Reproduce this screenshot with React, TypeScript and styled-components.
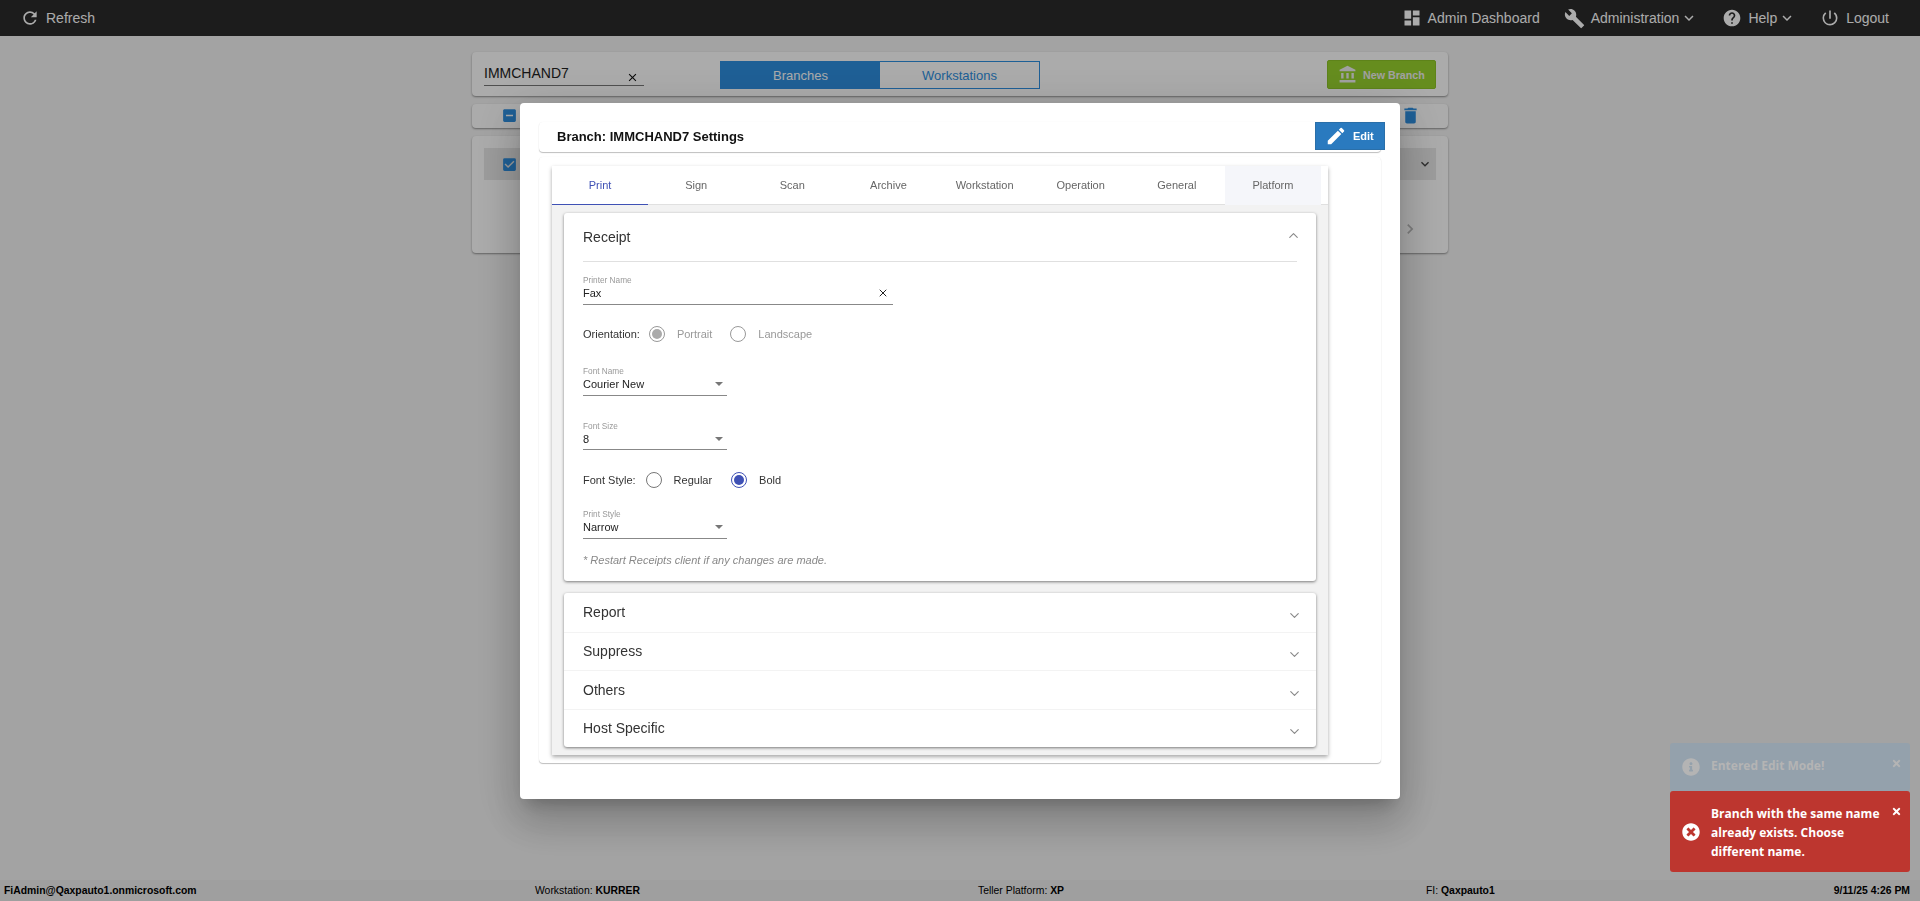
import React from 'react';
import styled, { createGlobalStyle } from 'styled-components';
import {
  MdRefresh,
  MdDashboard,
  MdBuild,
  MdHelp,
  MdPowerSettingsNew,
  MdKeyboardArrowDown,
  MdEdit,
  MdDelete,
  MdAccountBalance,
  MdClose,
  MdIndeterminateCheckBox,
  MdCheckBox,
  MdChevronRight,
} from 'react-icons/md';
import { FaTimesCircle, FaInfoCircle, FaTimes } from 'react-icons/fa';
import { ChevronDown, ChevronUp, X } from 'lucide-react';

const BLUE = '#2e8fe0';
const INDIGO = '#3f51b5';

const tabs = ['Print', 'Sign', 'Scan', 'Archive', 'Workstation', 'Operation', 'General', 'Platform'];
const closedPanels = ['Report', 'Suppress', 'Others', 'Host Specific'];

const App: React.FC = () => {
  return (
    <>
      <GlobalStyle />
      <Page>
        <TopBar>
          <NavItem>
            <MdRefresh size={20} />
            <span>Refresh</span>
          </NavItem>
          <NavGroup>
            <NavItem>
              <MdDashboard size={20} />
              <span>Admin Dashboard</span>
            </NavItem>
            <NavItem>
              <MdBuild size={21} />
              <span>Administration</span>
              <MdKeyboardArrowDown size={18} />
            </NavItem>
            <NavItem>
              <MdHelp size={20} />
              <span>Help</span>
              <MdKeyboardArrowDown size={18} />
            </NavItem>
            <NavItem>
              <MdPowerSettingsNew size={20} />
              <span>Logout</span>
            </NavItem>
          </NavGroup>
        </TopBar>

        <Content>
          <SearchCard>
            <SearchBox>
              <span>IMMCHAND7</span>
              <MdClose size={13} color="#111" />
            </SearchBox>
            <Toggle>
              <ToggleButton $active>Branches</ToggleButton>
              <ToggleButton>Workstations</ToggleButton>
            </Toggle>
            <NewBranch>
              <MdAccountBalance size={19} />
              <span>New Branch</span>
            </NewBranch>
          </SearchCard>
          <ActionsCard>
            <MdIndeterminateCheckBox size={17} color={BLUE} />
            <MdDelete size={21} color={BLUE} />
          </ActionsCard>
          <ListCard>
            <ListRow>
              <MdCheckBox size={17} color={BLUE} />
              <MdKeyboardArrowDown size={16} color="#444" />
            </ListRow>
            <Pager>
              <MdChevronRight size={20} color="#bbb" />
            </Pager>
          </ListCard>
        </Content>

        <Footer>
          <b>FiAdmin@Qaxpauto1.onmicrosoft.com</b>
          <span>
            Workstation: <b>KURRER</b>
          </span>
          <span>
            Teller Platform: <b>XP</b>
          </span>
          <span>
            FI: <b>Qaxpauto1</b>
          </span>
          <DateText>9/11/25 4:26 PM</DateText>
        </Footer>
      </Page>

      <Overlay>
        <Modal>
          <ModalHeader>
            <ModalTitle>Branch: IMMCHAND7 Settings</ModalTitle>
            <EditButton>
              <MdEdit size={22} />
              <span>Edit</span>
            </EditButton>
          </ModalHeader>
          <ModalBody>
            <TabsCard>
              <TabBar>
                {tabs.map((tab, i) => (
                  <Tab key={tab} $active={i === 0} $hover={tab === 'Platform'}>
                    {tab}
                  </Tab>
                ))}
              </TabBar>
              <TabPanel>
                <Accordion>
                  <AccordionHead>
                    <span>Receipt</span>
                    <ChevronUp size={15} color="#888" strokeWidth={1.8} />
                  </AccordionHead>
                  <ReceiptBody>
                    <Field $top={14} $width={310}>
                      <FieldLabel>Printer Name</FieldLabel>
                      <FieldValue>
                        <span>Fax</span>
                        <X size={12} color="#222" strokeWidth={2} />
                      </FieldValue>
                    </Field>

                    <RadioRow $top={19}>
                      <RadioLabel>Orientation:</RadioLabel>
                      <RadioOption $left={9} $disabled>
                        <Radio $checked $disabled />
                        <span>Portrait</span>
                      </RadioOption>
                      <RadioOption $left={18} $disabled>
                        <Radio $disabled />
                        <span>Landscape</span>
                      </RadioOption>
                    </RadioRow>

                    <Field $top={23} $width={144}>
                      <FieldLabel>Font Name</FieldLabel>
                      <FieldValue>
                        <span>Courier New</span>
                        <Caret />
                      </FieldValue>
                    </Field>

                    <Field $top={26} $width={144} $tight>
                      <FieldLabel>Font Size</FieldLabel>
                      <FieldValue>
                        <span>8</span>
                        <Caret />
                      </FieldValue>
                    </Field>

                    <RadioRow $top={20}>
                      <RadioLabel>Font Style:</RadioLabel>
                      <RadioOption $left={10}>
                        <Radio />
                        <span>Regular</span>
                      </RadioOption>
                      <RadioOption $left={19}>
                        <Radio $checked />
                        <span>Bold</span>
                      </RadioOption>
                    </RadioRow>

                    <Field $top={20} $width={144}>
                      <FieldLabel>Print Style</FieldLabel>
                      <FieldValue>
                        <span>Narrow</span>
                        <Caret />
                      </FieldValue>
                    </Field>

                    <Note>* Restart Receipts client if any changes are made.</Note>
                  </ReceiptBody>
                </Accordion>

                <Accordion>
                  {closedPanels.map((panel) => (
                    <ClosedRow key={panel}>
                      <span>{panel}</span>
                      <ChevronDown size={15} color="#888" strokeWidth={1.8} />
                    </ClosedRow>
                  ))}
                </Accordion>
              </TabPanel>
            </TabsCard>
          </ModalBody>
        </Modal>
      </Overlay>

      <Toasts>
        <Toast $kind="info">
          <ToastIcon>
            <FaInfoCircle size={18} />
          </ToastIcon>
          <span>Entered Edit Mode!</span>
          <ToastClose>
            <FaTimes size={11} />
          </ToastClose>
        </Toast>
        <Toast $kind="error">
          <ToastIcon>
            <FaTimesCircle size={18} />
          </ToastIcon>
          <span>Branch with the same name already exists. Choose different name.</span>
          <ToastClose>
            <FaTimes size={11} />
          </ToastClose>
        </Toast>
      </Toasts>
    </>
  );
};

const GlobalStyle = createGlobalStyle`
  html, body {
    margin: 0;
    padding: 0;
    height: 100%;
    overflow: hidden;
    background: #f3f3f3;
    font-family: 'Liberation Sans', Arial, sans-serif;
  }
  * {
    box-sizing: border-box;
  }
`;

const Page = styled.div`
  display: flex;
  flex-direction: column;
  height: 100vh;
`;

const TopBar = styled.header`
  display: flex;
  align-items: center;
  justify-content: space-between;
  height: 36px;
  flex-shrink: 0;
  padding: 0 31px 0 20px;
  background: #2a2a2a;
  color: #fff;
`;

const NavGroup = styled.nav`
  display: flex;
  align-items: center;
  gap: 24px;
`;

const NavItem = styled.div`
  display: flex;
  align-items: center;
  gap: 6px;
  font-size: 14px;

  span + svg {
    margin-left: -5px;
  }
`;

const Content = styled.main`
  flex: 1;
  display: flex;
  flex-direction: column;
  gap: 8px;
  width: 976px;
  margin: 0 auto;
  padding-top: 16px;
`;

const Card = styled.section`
  background: #fff;
  border-radius: 4px;
  box-shadow: 0 1px 2px rgba(0, 0, 0, 0.4);
`;

const SearchCard = styled(Card)`
  display: flex;
  align-items: center;
  height: 44px;
  padding: 0 12px;
`;

const SearchBox = styled.div`
  display: flex;
  align-items: flex-end;
  justify-content: space-between;
  width: 160px;
  height: 23px;
  margin-top: 1px;
  padding: 0 5px 1px 0;
  border-bottom: 1px solid #777;
  font-size: 14px;
  color: #222;

  span {
    margin-bottom: 3px;
  }
`;

const Toggle = styled.div`
  display: flex;
  width: 320px;
  height: 28px;
  margin: 2px auto 0 76px;
  border: 1px solid ${BLUE};
`;

const ToggleButton = styled.div<{ $active?: boolean }>`
  flex: 1;
  display: flex;
  align-items: center;
  justify-content: center;
  font-size: 13px;
  background: ${(p) => (p.$active ? BLUE : 'transparent')};
  color: ${(p) => (p.$active ? '#fff' : BLUE)};
`;

const NewBranch = styled.div`
  display: flex;
  align-items: center;
  gap: 6px;
  width: 109px;
  height: 29px;
  margin-top: 1px;
  padding-left: 10px;
  background: #98d22e;
  border: 1px solid #8cc328;
  border-radius: 2px;
  color: #f0f0f0;
  font-size: 10.7px;
  font-weight: 700;
`;

const ActionsCard = styled(Card)`
  display: flex;
  align-items: center;
  justify-content: space-between;
  height: 24px;
  padding: 0 27px 2px 29px;
`;

const ListCard = styled(Card)`
  height: 117px;
  padding: 12px;
`;

const ListRow = styled.div`
  display: flex;
  align-items: center;
  justify-content: space-between;
  height: 32px;
  padding: 0 3px 0 17px;
  background: #e8e8e8;
`;

const Pager = styled.div`
  display: flex;
  justify-content: flex-end;
  padding: 39px 16px 0 0;
`;

const Footer = styled.footer`
  display: grid;
  grid-template-columns: 531px 443px 448px 406px 1fr;
  align-items: center;
  height: 21px;
  flex-shrink: 0;
  padding: 0 10px 0 4px;
  background: #eeeeee;
  color: #000;
  font-size: 10.4px;
`;

const DateText = styled.b`
  justify-self: end;
`;

const Overlay = styled.div`
  position: fixed;
  inset: 0;
  display: flex;
  justify-content: center;
  padding-top: 103px;
  background: rgba(0, 0, 0, 0.33);
`;

const Modal = styled.div`
  width: 880px;
  height: 696px;
  padding: 19px;
  background: #fff;
  border-radius: 4px;
  box-shadow: 0 11px 15px -7px rgba(0, 0, 0, 0.2), 0 24px 38px 3px rgba(0, 0, 0, 0.14),
    0 9px 46px 8px rgba(0, 0, 0, 0.12);
`;

const ModalHeader = styled.div`
  display: flex;
  align-items: flex-start;
  justify-content: space-between;
  height: 30px;
  padding-left: 18px;
  border-radius: 4px;
  box-shadow: 0 1px 1px rgba(0, 0, 0, 0.25), 0 0 1px rgba(0, 0, 0, 0.08);
`;

const ModalTitle = styled.h1`
  margin: 0;
  font-size: 13px;
  font-weight: 700;
  line-height: 29px;
  color: #111;
`;

const EditButton = styled.button`
  display: flex;
  align-items: center;
  gap: 6px;
  width: 70px;
  height: 28px;
  margin-right: -4px;
  padding: 0 0 0 9px;
  background: #2a7abf;
  border: 1px solid #2a6fa9;
  color: #fff;
  font-family: inherit;
  font-size: 11px;
  font-weight: 700;
`;

const ModalBody = styled.div`
  height: 606px;
  margin-top: 5px;
  padding: 9px 13px;
  border-radius: 4px;
  box-shadow: 0 1px 1px rgba(0, 0, 0, 0.25), 0 0 1px rgba(0, 0, 0, 0.08);
`;

const TabsCard = styled.div`
  width: 776px;
  height: 589px;
  background: #f2f2f2;
  box-shadow: 0 2px 4px rgba(0, 0, 0, 0.35);
`;

const TabBar = styled.div`
  display: flex;
  height: 39px;
  padding-right: 7px;
  background: #fff;
  border-bottom: 1px solid #e0e0e0;
`;

const Tab = styled.div<{ $active?: boolean; $hover?: boolean }>`
  flex: 1;
  display: flex;
  align-items: center;
  justify-content: center;
  height: 39px;
  font-size: 11px;
  color: ${(p) => (p.$active ? INDIGO : '#666')};
  background: ${(p) => (p.$hover ? '#f5f6fa' : 'transparent')};
  border-bottom: 1px solid ${(p) => (p.$active ? INDIGO : 'transparent')};
`;

const TabPanel = styled.div`
  display: flex;
  flex-direction: column;
  gap: 12px;
  padding: 8px 12px;
`;

const Accordion = styled.div`
  background: #fff;
  border-radius: 3px;
  box-shadow: 0 1px 3px rgba(0, 0, 0, 0.5);
`;

const AccordionHead = styled.div`
  display: flex;
  align-items: center;
  justify-content: space-between;
  height: 49px;
  margin: 0 19px;
  border-bottom: 1px solid #e0e0e0;
  font-size: 14px;
  color: #333;

  svg {
    margin: -3px -4px 0 0;
  }
`;

const ClosedRow = styled.div`
  display: flex;
  align-items: center;
  justify-content: space-between;
  height: 38.5px;
  padding: 0 14px 0 19px;
  font-size: 14px;
  color: #333;

  & + & {
    border-top: 1px solid #f3f3f3;
  }

  svg {
    margin-top: 7px;
  }
`;

const ReceiptBody = styled.div`
  display: flex;
  flex-direction: column;
  align-items: flex-start;
  height: 319px;
  padding: 0 19px;
`;

const Field = styled.div<{ $top: number; $width: number; $tight?: boolean }>`
  width: ${(p) => p.$width}px;
  margin-top: ${(p) => p.$top}px;
  padding-bottom: ${(p) => (p.$tight ? 4 : 5)}px;
  border-bottom: 1px solid #888;
`;

const FieldLabel = styled.div`
  font-size: 8.25px;
  line-height: 10px;
  color: #999;
`;

const FieldValue = styled.div`
  display: flex;
  align-items: center;
  justify-content: space-between;
  height: 13px;
  padding-right: 4px;
  font-size: 11px;
  color: #222;
`;

const Caret = styled.i`
  width: 0;
  height: 0;
  border-left: 4px solid transparent;
  border-right: 4px solid transparent;
  border-top: 4px solid #777;
`;

const RadioRow = styled.div<{ $top: number }>`
  display: flex;
  align-items: center;
  height: 20px;
  margin-top: ${(p) => p.$top}px;
  font-size: 11px;
`;

const RadioLabel = styled.span`
  color: #333;
`;

const RadioOption = styled.div<{ $left: number; $disabled?: boolean }>`
  display: flex;
  align-items: center;
  gap: 12px;
  margin-left: ${(p) => p.$left}px;
  color: ${(p) => (p.$disabled ? '#999' : '#333')};
`;

const Radio = styled.i<{ $checked?: boolean; $disabled?: boolean }>`
  display: flex;
  align-items: center;
  justify-content: center;
  width: 16px;
  height: 16px;
  border-radius: 50%;
  border: 1px solid ${(p) => (p.$disabled ? '#999' : p.$checked ? INDIGO : '#777')};

  &::after {
    content: '';
    display: ${(p) => (p.$checked ? 'block' : 'none')};
    width: 10px;
    height: 10px;
    border-radius: 50%;
    background: ${(p) => (p.$disabled ? '#aaa' : INDIGO)};
  }
`;

const Note = styled.p`
  margin: 14px 0 0;
  font-size: 11px;
  line-height: 14px;
  font-style: italic;
  color: #888;
`;

const Toasts = styled.div`
  position: fixed;
  right: 10px;
  bottom: 29px;
  display: flex;
  flex-direction: column;
  width: 240px;
`;

const Toast = styled.div<{ $kind: 'info' | 'error' }>`
  position: relative;
  display: flex;
  align-items: center;
  min-height: 48px;
  padding: ${(p) => (p.$kind === 'error' ? '13px 26px 11px 41px' : '10px 26px 14px 41px')};
  border-radius: 3px;
  background: ${(p) => (p.$kind === 'error' ? '#bd362f' : '#94a1ac')};
  color: ${(p) => (p.$kind === 'error' ? '#fff' : '#b4b4b4')};
  font-family: 'Open Sans', sans-serif;
  font-size: 12px;
  font-weight: 700;
  line-height: 19px;
`;

const ToastIcon = styled.span`
  position: absolute;
  left: 12px;
  top: 50%;
  display: flex;
  margin-top: -9px;
`;

const ToastClose = styled.span`
  position: absolute;
  top: 15px;
  right: 8px;
  display: flex;
`;

export default App;
